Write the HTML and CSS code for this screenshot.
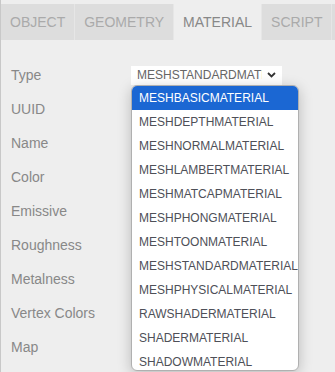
FILE: index.html
```html
<!DOCTYPE html>
<html>
<head>
<meta charset="utf-8">
<link rel="stylesheet" href="styles.css">
</head>
<body>
<div class="sidebar">
  <div class="tabs">
    <div class="tab">Object</div>
    <div class="tab">Geometry</div>
    <div class="tab selected">Material</div>
    <div class="tab">Script</div>
  </div>
  <div class="panel">
    <div class="row">
      <span class="label">Type</span>
      <div class="select">
        <span class="select-value">MeshStandardMaterial</span>
        <svg class="chevron" width="9" height="6" viewBox="0 0 9 6"><polyline points="1,1 4.5,4.5 8,1" fill="none" stroke="#333" stroke-width="1.8"/></svg>
      </div>
    </div>
    <div class="row"><span class="label">UUID</span></div>
    <div class="row"><span class="label">Name</span></div>
    <div class="row"><span class="label">Color</span></div>
    <div class="row"><span class="label">Emissive</span></div>
    <div class="row"><span class="label">Roughness</span></div>
    <div class="row"><span class="label">Metalness</span></div>
    <div class="row"><span class="label">Vertex Colors</span></div>
    <div class="row"><span class="label">Map</span></div>
  </div>
  <div class="dropdown">
    <div class="option active">MeshBasicMaterial</div>
    <div class="option">MeshDepthMaterial</div>
    <div class="option">MeshNormalMaterial</div>
    <div class="option">MeshLambertMaterial</div>
    <div class="option">MeshMatcapMaterial</div>
    <div class="option">MeshPhongMaterial</div>
    <div class="option">MeshToonMaterial</div>
    <div class="option">MeshStandardMaterial</div>
    <div class="option">MeshPhysicalMaterial</div>
    <div class="option">RawShaderMaterial</div>
    <div class="option">ShaderMaterial</div>
    <div class="option">ShadowMaterial</div>
  </div>
</div>
</body>
</html>
```
FILE: styles.css
```css
html, body {
  margin: 0;
  padding: 0;
  background: #eee;
  font-family: "Liberation Sans", Arial, sans-serif;
  overflow: hidden;
}

.sidebar {
  position: relative;
  height: 372px;
  box-sizing: border-box;
  border-left: 1px solid #c8c8c8;
  padding-top: 4px;
  background: #eee;
}

.tabs {
  display: flex;
  background: #ddd;
  height: 36px;
}

.tab {
  padding: 10px 9px;
  line-height: 16px;
  font-size: 14px;
  color: #aaa;
  text-transform: uppercase;
  border-right: 1px solid #e6e6e6;
}

.tab.selected {
  background: #eee;
  color: #888;
}

.panel {
  padding: 23px 10px 0 10px;
}

.row {
  display: flex;
  align-items: center;
  height: 24px;
  margin-bottom: 10px;
}

.label {
  width: 120px;
  font-size: 14px;
  color: #888;
}

.select {
  display: flex;
  align-items: center;
  width: 151px;
  height: 19px;
  box-sizing: border-box;
  background: #fff;
  padding-left: 6px;
  font-size: 12px;
  color: #666;
}

.select-value {
  width: 125px;
  overflow: hidden;
  white-space: nowrap;
  text-transform: uppercase;
}

.chevron {
  margin-left: 5px;
}

.dropdown {
  position: absolute;
  left: 130px;
  top: 85px;
  width: 168px;
  height: 286px;
  box-sizing: border-box;
  background: #fff;
  border: 1px solid #b0b0b0;
  border-radius: 6px;
  overflow: hidden;
  box-shadow: 0 3px 14px rgba(0, 0, 0, 0.22);
}

.option {
  height: 24px;
  line-height: 24px;
  padding-left: 7px;
  font-size: 12px;
  color: #4e5058;
  text-transform: uppercase;
  white-space: nowrap;
}

.option.active {
  background: #1b67d3;
  color: #fff;
}
```
